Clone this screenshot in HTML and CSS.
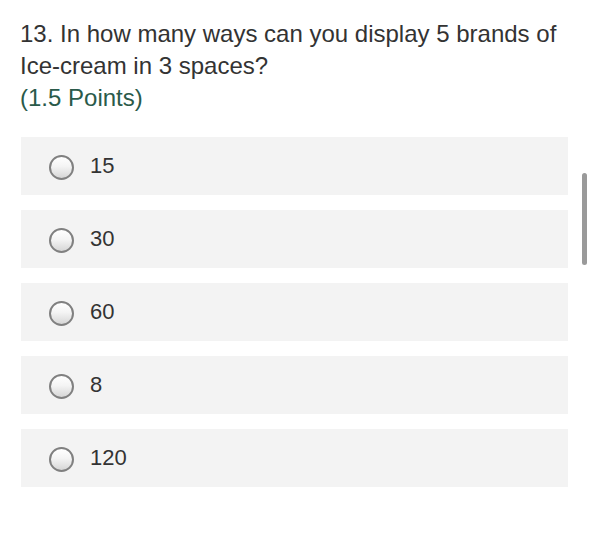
FILE: index.html
```html
<!DOCTYPE html>
<html lang="en">
<head>
<meta charset="utf-8">
<title>Question 13</title>
<link rel="stylesheet" href="styles.css">
</head>
<body>
<main class="page">
  <div class="question">
    <div class="title">13. In how many ways can you display 5 brands of<br>Ice-cream in 3 spaces?</div>
    <div class="points">(1.5 Points)</div>
  </div>
  <div class="options">
    <label class="option"><span class="radio"></span><span class="label">15</span></label>
    <label class="option"><span class="radio"></span><span class="label">30</span></label>
    <label class="option"><span class="radio"></span><span class="label">60</span></label>
    <label class="option"><span class="radio"></span><span class="label">8</span></label>
    <label class="option"><span class="radio"></span><span class="label">120</span></label>
  </div>
  <div class="scrollbar"></div>
</main>
</body>
</html>
```

FILE: styles.css
```css
html, body {
  margin: 0;
  padding: 0;
  background: #ffffff;
}
.page {
  position: relative;
  width: 590px;
  height: 537px;
  box-sizing: border-box;
  padding: 18px 0 0 20px;
  font-family: "Liberation Sans", Arial, sans-serif;
  color: #333333;
}
.question {
  width: 560px;
  font-size: 24px;
  line-height: 32px;
  white-space: nowrap;
}
.title {
  color: #333333;
}
.points {
  color: #2a5a4a;
}
.options {
  display: flex;
  flex-direction: column;
  gap: 15px;
  margin-top: 23px;
  margin-left: 1px;
  width: 547px;
}
.option {
  display: flex;
  align-items: center;
  height: 58px;
  background: #f3f3f3;
  padding-left: 28px;
  box-sizing: border-box;
}
.radio {
  width: 25px;
  height: 25px;
  box-sizing: border-box;
  border-radius: 50%;
  border: 2px solid #808080;
  background: linear-gradient(#ffffff 0%, #f4f4f4 45%, #d6d6d6 100%);
  margin-top: 2px;
}
.label {
  margin-left: 16px;
  font-size: 22px;
  color: #333333;
}
.scrollbar {
  position: absolute;
  left: 582px;
  top: 173px;
  width: 5px;
  height: 92px;
  border-radius: 3px;
  background: #9a9a9a;
}
```
